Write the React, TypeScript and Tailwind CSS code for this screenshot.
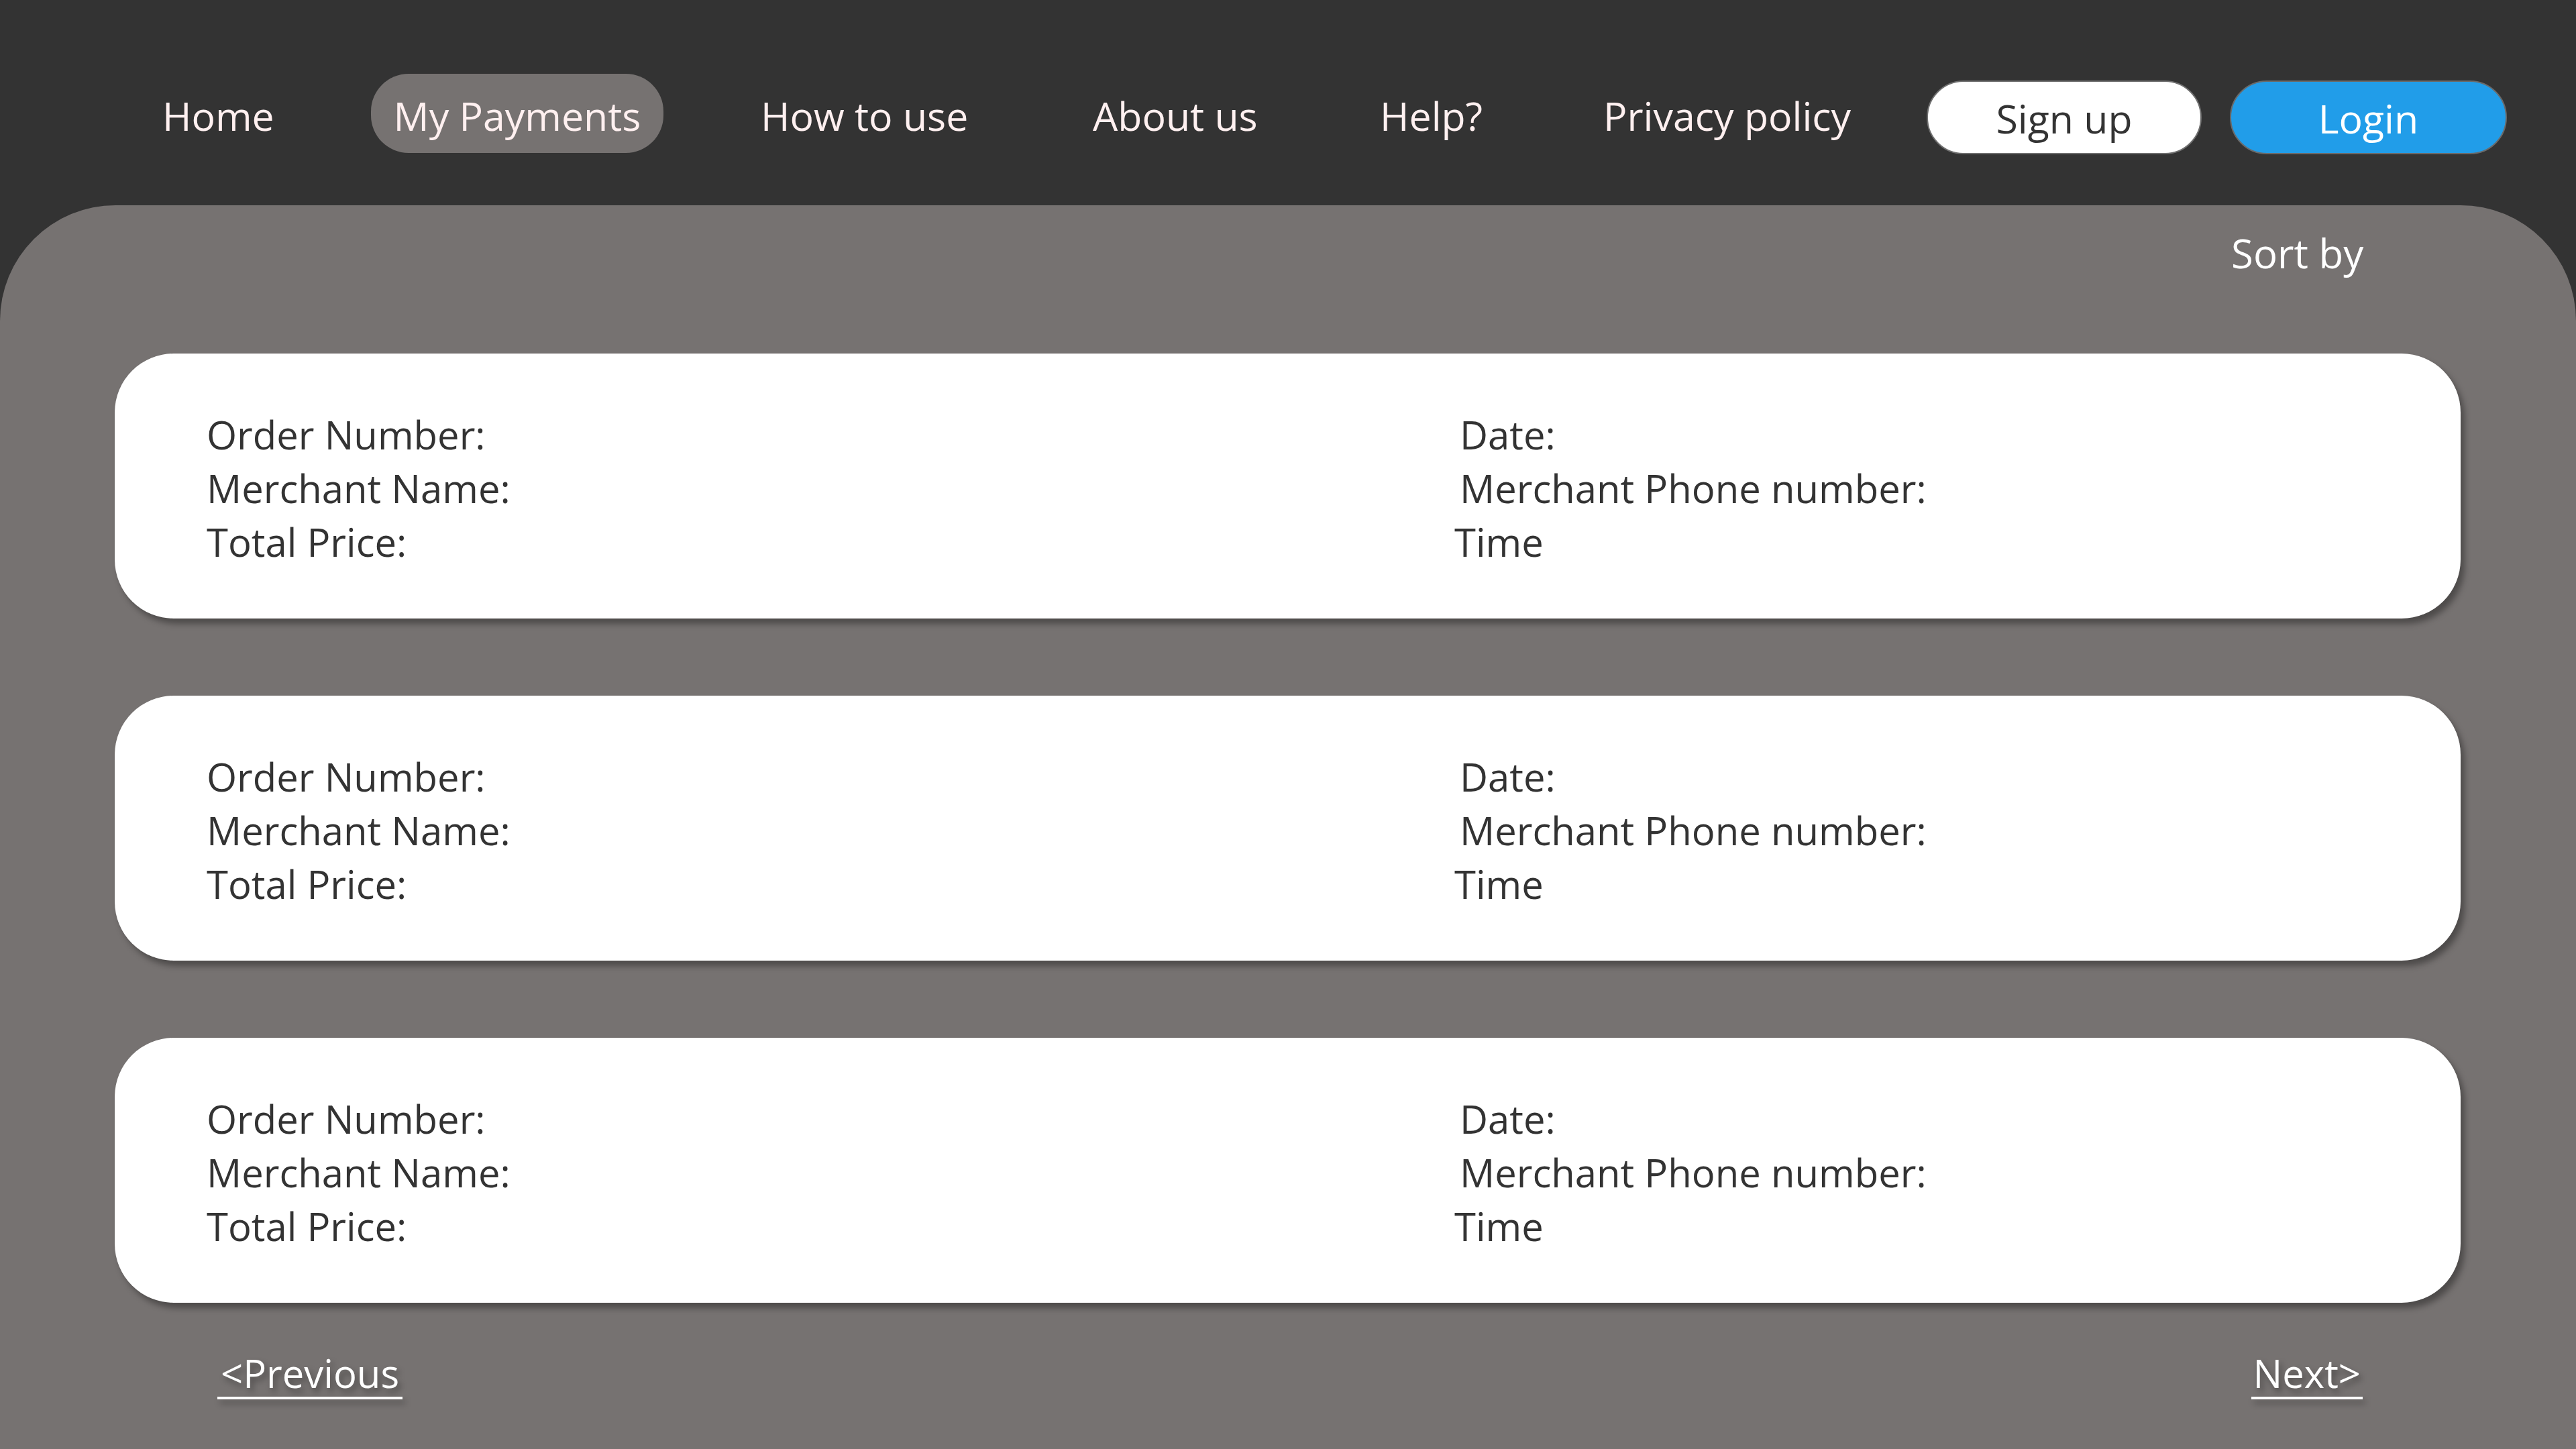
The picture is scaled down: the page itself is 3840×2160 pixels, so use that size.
const font = { fontFamily: '"Open Sans", "Noto Sans", "Liberation Sans", sans-serif' };

function Card() {
  return (
    <div className="ml-[171px] flex h-[395px] w-[3497px] rounded-[88px] bg-white pl-[137px] pt-[81px] text-[58px] leading-[80px] text-[#333333] shadow-[6px_8px_10px_rgba(0,0,0,0.35)]">
      <div className="w-[1868px]">
        <p>Order Number:</p>
        <p>Merchant Name:</p>
        <p>Total Price:</p>
      </div>
      <div>
        <p>Date:</p>
        <p>Merchant Phone number:</p>
        <p className="-ml-2">Time</p>
      </div>
    </div>
  );
}

export default function App() {
  return (
    <div style={font} className="flex h-[2160px] w-[3840px] flex-col bg-[#333333]">
      <nav className="flex h-[306px] shrink-0 items-start pl-[242px] pt-[110px] text-[59px] leading-[60px] text-[#fff0f0]">
        <div className="flex h-[118px] items-center">
          <a className="w-[311px] pt-[6px]">Home</a>
          <a className="flex h-[118px] w-[436px] items-center justify-center rounded-[56px] bg-[#767271] pt-[6px]">My Payments</a>
          <a className="ml-[145px] w-[495px] pt-[6px]">How to use</a>
          <a className="w-[428px] pt-[6px]">About us</a>
          <a className="w-[333px] pt-[6px]">Help?</a>
          <a className="w-[482px] pt-[6px]">Privacy policy</a>
          <button className="mt-[12px] flex h-[110px] w-[410px] items-center justify-center rounded-[55px] border-2 border-[#6f6f6f] bg-white pt-[2px] text-[#333333]">
            Sign up
          </button>
          <button className="ml-[42px] mt-[12px] flex h-[110px] w-[413px] items-center justify-center rounded-[55px] border-2 border-[#6a6a6a] bg-[#219de9] pt-[2px] text-white">
            Login
          </button>
        </div>
      </nav>

      <main className="flex flex-1 flex-col rounded-t-[172px] bg-[#767271]">
        <div className="ml-[3326px] mt-[41px] text-[60px] leading-[60px] text-white">Sort by</div>
        <div className="mt-[120px] flex flex-col gap-[115px]">
          <Card />
          <Card />
          <Card />
        </div>
        <div className="mt-[70px] flex justify-between pl-[324px] pr-[318px] text-[58px] leading-[70px] text-white">
          <a className="border-b-4 border-white px-[5px] drop-shadow-[4px_6px_5px_rgba(0,0,0,0.35)]">&lt;Previous</a>
          <a className="border-b-4 border-white px-[3px] drop-shadow-[4px_6px_5px_rgba(0,0,0,0.35)]">Next&gt;</a>
        </div>
      </main>
    </div>
  );
}
